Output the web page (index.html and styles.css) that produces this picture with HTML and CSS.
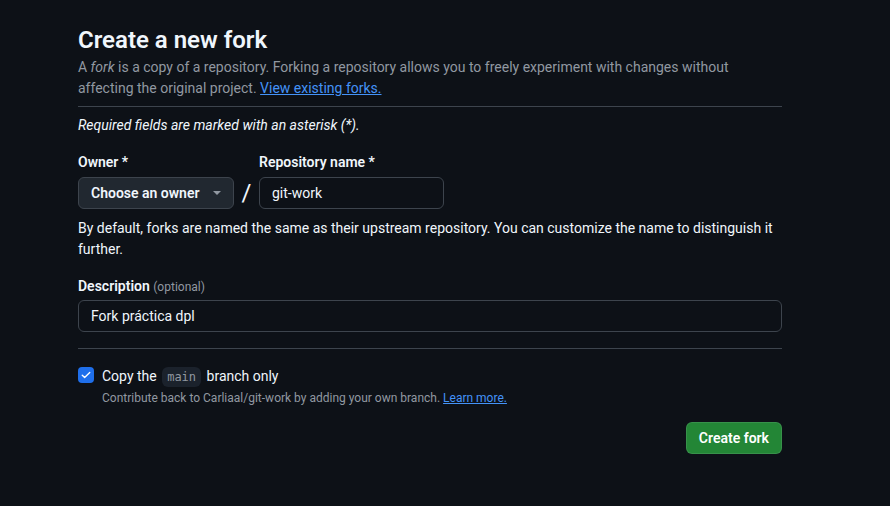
FILE: index.html
```html
<!DOCTYPE html>
<html lang="en">
<head>
<meta charset="utf-8">
<title>Create a new fork</title>
<link rel="stylesheet" href="styles.css">
</head>
<body>
<main class="page">
  <header class="head">
    <h1 class="title">Create a new fork</h1>
    <p class="lead">A <em>fork</em> is a copy of a repository. Forking a repository allows you to freely experiment with changes without affecting the original project. <a href="#" class="link">View existing forks.</a></p>
  </header>
  <p class="req">Required fields are marked with an asterisk (*).</p>
  <div class="names">
    <div class="field">
      <label class="label">Owner *</label>
      <button class="owner" type="button">Choose an owner <span class="caret"></span></button>
    </div>
    <span class="slash">/</span>
    <div class="field">
      <label class="label">Repository name *</label>
      <input class="input repo" type="text" value="git-work">
    </div>
  </div>
  <p class="help">By default, forks are named the same as their upstream repository. You can customize the name to distinguish it further.</p>
  <div class="field desc">
    <label class="label desc-label">Description <span class="opt">(optional)</span></label>
    <input class="input full" type="text" value="Fork práctica dpl">
  </div>
  <hr class="rule">
  <div class="check">
    <span class="box"><svg viewBox="0 0 16 16" width="12" height="12"><path d="M3 8.2l3.2 3.2L13 4.6" fill="none" stroke="#fff" stroke-width="1.8" stroke-linecap="round" stroke-linejoin="round"/></svg></span>
    <div class="check-text">
      <div class="check-label">Copy the <code class="code">main</code> branch only</div>
      <div class="check-note">Contribute back to Carliaal/git-work by adding your own branch. <a href="#" class="link">Learn more.</a></div>
    </div>
  </div>
  <div class="actions">
    <button class="primary" type="button">Create fork</button>
  </div>
</main>
</body>
</html>
```
FILE: styles.css
```css
html, body {
  margin: 0;
  padding: 0;
  background: #0d1117;
  color: #f0f6fc;
  font-family: Roboto, "Liberation Sans", sans-serif;
  font-size: 14px;
  line-height: 21px;
}
.page {
  width: 704px;
  margin: 0 0 0 78px;
  padding-top: 24px;
}
.head {
  padding-bottom: 7px;
  border-bottom: 1px solid #3d444d;
}
.title {
  margin: 0;
  font-size: 24px;
  line-height: 32px;
  font-weight: 600;
}
.lead {
  margin: 1px 0 0;
  color: #9198a1;
}
.link {
  color: #4493f8;
  text-decoration: underline;
}
.req {
  margin: 8px 0 0;
  font-style: italic;
}
.names {
  display: flex;
  align-items: flex-end;
  margin-top: 16px;
}
.field {
  display: flex;
  flex-direction: column;
}
.label {
  font-weight: 600;
  line-height: 21px;
  margin-bottom: 4px;
}
.desc-label {
  margin-bottom: 2px;
}
.owner {
  height: 32px;
  width: 156px;
  box-sizing: border-box;
  background: #212830;
  border: 1px solid #3d444d;
  border-radius: 6px;
  color: #f0f6fc;
  font-family: inherit;
  font-size: 14px;
  font-weight: 600;
  padding: 0 12px;
  white-space: nowrap;
  display: flex;
  align-items: center;
  justify-content: space-between;
}
.caret {
  width: 0;
  height: 0;
  border-left: 4px solid transparent;
  border-right: 4px solid transparent;
  border-top: 4px solid #9198a1;
  margin-left: 8px;
}
.slash {
  font-size: 24px;
  line-height: 32px;
  width: 25px;
  text-align: center;
}
.input {
  height: 32px;
  box-sizing: border-box;
  background: #0d1117;
  border: 1px solid #3d444d;
  border-radius: 6px;
  color: #f0f6fc;
  font-family: inherit;
  font-size: 14px;
  padding: 0 12px;
  outline: none;
}
.repo {
  width: 185px;
}
.full {
  width: 704px;
}
.help {
  margin: 9px 0 0;
}
.desc {
  margin-top: 16px;
}
.opt {
  color: #9198a1;
  font-weight: 400;
  font-size: 12px;
}
.rule {
  border: 0;
  border-top: 1px solid #3d444d;
  margin: 16px 0 0;
}
.check {
  display: flex;
  gap: 8px;
  margin-top: 18px;
}
.box {
  width: 16px;
  height: 16px;
  border-radius: 4px;
  background: #1f6feb;
  display: flex;
  align-items: center;
  justify-content: center;
  flex: none;
}
.check-label {
  line-height: 18px;
}
.code {
  font-family: "DejaVu Sans Mono", "Liberation Mono", monospace;
  font-size: 12px;
  background: #1b222c;
  color: #9198a1;
  padding: 3px 5px;
  border-radius: 6px;
  margin: 0 2px;
}
.check-note {
  font-size: 12px;
  line-height: 18px;
  margin-top: 3px;
  color: #9198a1;
}
.actions {
  display: flex;
  justify-content: flex-end;
  margin-top: 15px;
}
.primary {
  height: 32px;
  padding: 0 12px;
  background: #238636;
  border: 1px solid rgba(240,246,252,0.1);
  border-radius: 6px;
  color: #fff;
  font-family: inherit;
  font-size: 14px;
  font-weight: 600;
}
```
